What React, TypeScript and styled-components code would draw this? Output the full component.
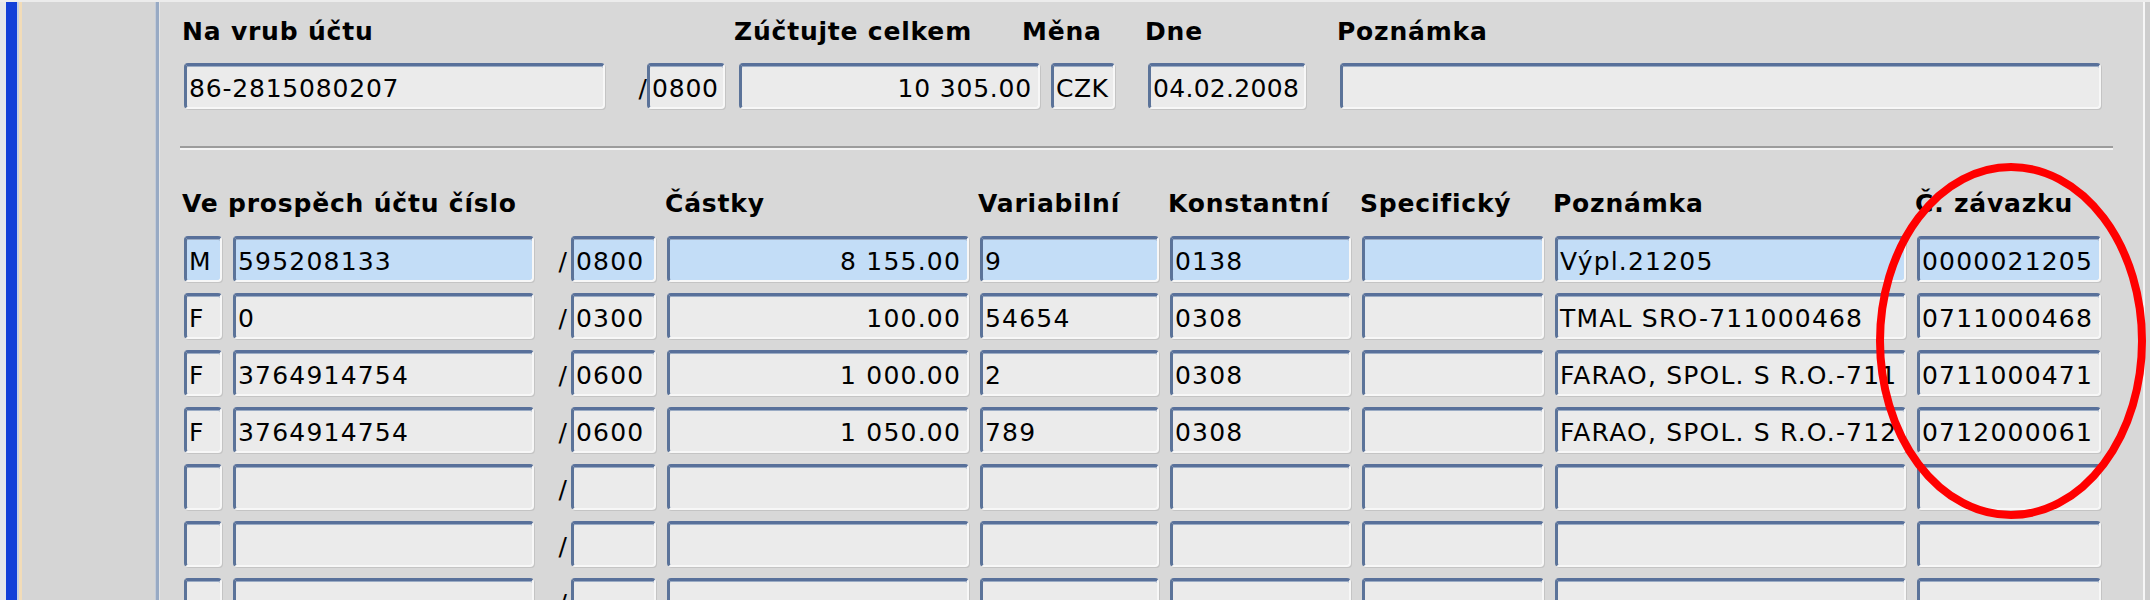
import styled, { createGlobalStyle } from "styled-components";

const GlobalStyle = createGlobalStyle`
  html, body {
    margin: 0;
    padding: 0;
  }
  body {
    width: 2150px;
    height: 600px;
    overflow: hidden;
    background: #d6d6d6;
    font-family: "DejaVu Sans", "Liberation Sans", sans-serif;
  }
`;

const Frame = styled.div`
  display: flex;
  width: 2150px;
  height: 600px;
  box-sizing: border-box;
  border-top: 2px solid #ececec;
  overflow: hidden;
`;

const WindowEdge = styled.div`
  flex: 0 0 22px;
  background: linear-gradient(
    to right,
    #e4e6ea 0 6px,
    #123fd8 6px 17px,
    #c6d0e4 17px 19px,
    #f2dcb8 19px 22px
  );
`;

const SidePane = styled.div`
  flex: 0 0 133px;
  background: #d5d5d5;
`;

const PaneDivider = styled.div`
  flex: 0 0 5px;
  background: linear-gradient(
    to right,
    #c3cbd8 0 1px,
    #98aac4 1px 4px,
    #e6e6e6 4px 5px
  );
`;

const Panel = styled.main`
  position: relative;
  flex: 0 0 1983px;
  box-sizing: border-box;
  padding: 15px 0 0 24px;
  background: #d8d8d8;
`;

const RightEdge = styled.div`
  flex: 1;
  border-left: 2px solid #f6f6f6;
  background: #cdcdcd;
`;

const TopRow = styled.div`
  display: flex;
  align-items: flex-start;
`;

const Field = styled.div<{ $width: number; $gap?: number }>`
  flex: none;
  display: flex;
  flex-direction: column;
  gap: 16px;
  width: ${(p) => p.$width}px;
  margin-left: ${(p) => p.$gap ?? 0}px;
`;

const Label = styled.div<{ $shift?: number; $span?: number }>`
  height: 30px;
  line-height: 30px;
  margin-left: ${(p) => p.$shift ?? -2}px;
  grid-column: span ${(p) => p.$span ?? 1};
  font-family: "DejaVu Sans", sans-serif;
  font-weight: bold;
  font-size: 25px;
  letter-spacing: 0.8px;
  white-space: nowrap;
  color: #000;
`;

const Cell = styled.div<{ $active?: boolean; $align?: "left" | "right"; $spacing?: number }>`
  box-sizing: border-box;
  flex: 1 1 auto;
  min-width: 0;
  height: 46px;
  display: flex;
  align-items: center;
  justify-content: ${(p) => (p.$align === "right" ? "flex-end" : "flex-start")};
  padding: 4px ${(p) => (p.$align === "right" ? 6 : 1)}px 0 2px;
  border-top: 3px solid #58709a;
  border-left: 3px solid #5b7399;
  border-right: 2px solid #f7f7f7;
  border-bottom: 2px solid #f7f7f7;
  border-radius: 4px;
  box-shadow: inset 0 1px 0 #9aabc4, 1px 1px 0 #c4c4c4;
  background: ${(p) => (p.$active ? "#c3ddf7" : "#ebebeb")};
  font-family: "DejaVu Sans", sans-serif;
  font-size: 25px;
  letter-spacing: ${(p) => p.$spacing ?? 1.2}px;
  color: #000;
  white-space: nowrap;
  overflow: hidden;
`;

const BankGroup = styled.div`
  display: flex;
  align-items: center;
`;

const Slash = styled.span<{ $width: number }>`
  flex: 0 0 ${(p) => p.$width}px;
  box-sizing: border-box;
  padding: 4px ${(p) => (p.$width > 30 ? 0 : 4)}px 0 0;
  text-align: right;
  font-family: "DejaVu Sans", sans-serif;
  font-size: 25px;
  color: #000;
`;

const Separator = styled.hr`
  width: 1933px;
  height: 0;
  margin: 37px 0 0 -4px;
  border: 0;
  border-top: 2px solid #9c9c9c;
  border-bottom: 2px solid #f4f4f4;
`;

const Table = styled.div`
  display: grid;
  grid-template-columns: 38px 301px 111px 302px 179px 181px 182px 351px 184px;
  grid-template-rows: 36px repeat(7, 46px);
  column-gap: 11px;
  row-gap: 11px;
  margin-top: 39px;
`;

const Marker = styled.svg`
  position: absolute;
  left: 0;
  top: 0;
  width: 100%;
  height: 100%;
  overflow: visible;
  pointer-events: none;
`;

type Payment = {
  kind: string;
  account: string;
  bank: string;
  amount: string;
  variable: string;
  constant: string;
  specific: string;
  note: string;
  liability: string;
};

// poznámky u FARAO jsou v okně useknuté, držíme jen viditelnou část
const payments: Payment[] = [
  { kind: "M", account: "595208133", bank: "0800", amount: "8 155.00", variable: "9", constant: "0138", specific: "", note: "Výpl.21205", liability: "0000021205" },
  { kind: "F", account: "0", bank: "0300", amount: "100.00", variable: "54654", constant: "0308", specific: "", note: "TMAL SRO-711000468", liability: "0711000468" },
  { kind: "F", account: "3764914754", bank: "0600", amount: "1 000.00", variable: "2", constant: "0308", specific: "", note: "FARAO, SPOL. S R.O.-711", liability: "0711000471" },
  { kind: "F", account: "3764914754", bank: "0600", amount: "1 050.00", variable: "789", constant: "0308", specific: "", note: "FARAO, SPOL. S R.O.-712", liability: "0712000061" },
];

const emptyRow: Payment = { kind: "", account: "", bank: "", amount: "", variable: "", constant: "", specific: "", note: "", liability: "" };

const rows: Payment[] = [...payments, emptyRow, emptyRow, emptyRow];

function PaymentRow({ row, active }: { row: Payment; active: boolean }) {
  return (
    <>
      <Cell $active={active}>{row.kind}</Cell>
      <Cell $active={active}>{row.account}</Cell>
      <BankGroup>
        <Slash $width={26}>/</Slash>
        <Cell $active={active}>{row.bank}</Cell>
      </BankGroup>
      <Cell $active={active} $align="right">{row.amount}</Cell>
      <Cell $active={active}>{row.variable}</Cell>
      <Cell $active={active}>{row.constant}</Cell>
      <Cell $active={active}>{row.specific}</Cell>
      <Cell $active={active}>{row.note}</Cell>
      <Cell $active={active}>{row.liability}</Cell>
    </>
  );
}

export default function App() {
  return (
    <>
      <GlobalStyle />
      <Frame>
        <WindowEdge />
        <SidePane />
        <PaneDivider />
        <Panel>
          <TopRow>
            <Field $width={421}>
              <Label>Na vrub účtu</Label>
              <Cell $spacing={0.8}>86-2815080207</Cell>
            </Field>
            <Field $width={120}>
              <Label>&nbsp;</Label>
              <BankGroup>
                <Slash $width={42}>/</Slash>
                <Cell $spacing={0.8}>0800</Cell>
              </BankGroup>
            </Field>
            <Field $width={301} $gap={14}>
              <Label $shift={-5}>Zúčtujte celkem</Label>
              <Cell $align="right" $spacing={0.8}>10 305.00</Cell>
            </Field>
            <Field $width={64} $gap={11}>
              <Label $shift={-29}>Měna</Label>
              <Cell $spacing={0.5}>CZK</Cell>
            </Field>
            <Field $width={158} $gap={33}>
              <Label $shift={-3}>Dne</Label>
              <Cell $spacing={0.3}>04.02.2008</Cell>
            </Field>
            <Field $width={761} $gap={34}>
              <Label $shift={-3}>Poznámka</Label>
              <Cell />
            </Field>
          </TopRow>

          <Separator />

          <Table>
            <Label $span={3}>Ve prospěch účtu číslo</Label>
            <Label>Částky</Label>
            <Label>Variabilní</Label>
            <Label>Konstantní</Label>
            <Label>Specifický</Label>
            <Label>Poznámka</Label>
            <Label>Č. závazku</Label>
            {rows.map((row, i) => (
              <PaymentRow key={i} row={row} active={i === 0} />
            ))}
          </Table>

          <Marker>
            <ellipse cx={1851} cy={339} rx={131} ry={174} fill="none" stroke="#ff0000" strokeWidth={8} />
          </Marker>
        </Panel>
        <RightEdge />
      </Frame>
    </>
  );
}
